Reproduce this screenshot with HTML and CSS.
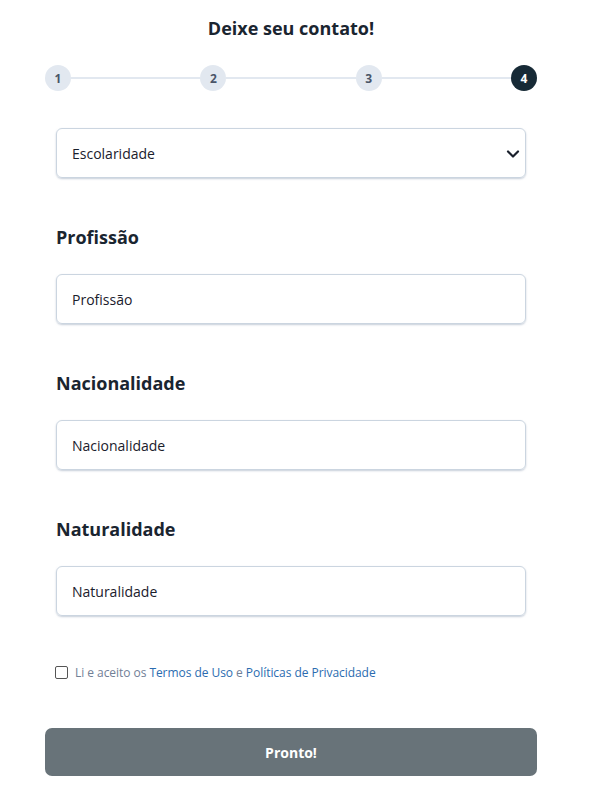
FILE: index.html
```html
<!DOCTYPE html>
<html lang="pt">
<head>
<meta charset="utf-8">
<link rel="stylesheet" href="styles.css">
</head>
<body>
<div class="page">
  <h1 class="title">Deixe seu contato!</h1>
  <div class="stepper">
    <span class="step">1</span>
    <span class="bar"></span>
    <span class="step">2</span>
    <span class="bar"></span>
    <span class="step">3</span>
    <span class="bar"></span>
    <span class="step active">4</span>
  </div>
  <div class="form">
    <div class="field select">
      <span>Escolaridade</span>
      <svg class="chev" width="14" height="10" viewBox="0 0 14 10"><path d="M2 2.5 L7 7.5 L12 2.5" fill="none" stroke="#1a202c" stroke-width="2.2" stroke-linecap="round" stroke-linejoin="round"/></svg>
    </div>
    <div class="group">
      <label class="label">Profissão</label>
      <div class="field">Profissão</div>
    </div>
    <div class="group">
      <label class="label">Nacionalidade</label>
      <div class="field">Nacionalidade</div>
    </div>
    <div class="group">
      <label class="label">Naturalidade</label>
      <div class="field">Naturalidade</div>
    </div>
    <div class="terms">
      <span class="box"></span>
      <span class="txt">Li e aceito os <a>Termos de Uso</a> e <a>Políticas de Privacidade</a></span>
    </div>
  </div>
  <button class="btn">Pronto!</button>
</div>
</body>
</html>
```

FILE: styles.css
```css
* { box-sizing: border-box; }
html, body { margin: 0; padding: 0; background: #fff; }
body { font-family: "Open Sans", "Noto Sans", sans-serif; color: #1a202c; }
.page { width: 492px; margin-left: 45px; padding-top: 16px; }
.title { margin: 0; font-size: 18px; font-weight: 700; line-height: 24px; text-align: center; color: #1a2530; }
.stepper { display: flex; align-items: center; margin-top: 25px; }
.step { width: 26px; height: 26px; border-radius: 50%; background: #e2e8f0; color: #4a5568; font-size: 12px; font-weight: 700; display: flex; align-items: center; justify-content: center; flex: none; }
.step.active { background: #172a36; color: #fff; }
.bar { flex: 1; height: 2px; background: #e2e8f0; }
.form { padding: 0 11px; margin-top: 37px; }
.field { height: 50px; border: 1px solid #cbd5e0; border-radius: 6px; box-shadow: 0 1px 2px rgba(160,174,192,0.6); padding: 0 15px; display: flex; align-items: center; font-size: 14px; color: #1a202c; }
.select { justify-content: space-between; padding-right: 5px; }
.chev { margin-top: 1px; }
.group { margin-top: 47px; }
.label { display: block; font-size: 18px; font-weight: 700; line-height: 24px; color: #1a2530; margin-bottom: 25px; }
.terms { display: flex; align-items: center; margin-top: 48px; margin-left: -1px; }
.box { width: 13px; height: 13px; border: 1px solid #555; border-radius: 2px; flex: none; }
.txt { margin-left: 7px; font-size: 12px; color: #718096; letter-spacing: -0.05px; }
.txt a { color: #2b6cb0; }
.btn { display: block; width: 492px; height: 48px; margin-top: 47px; border: none; border-radius: 7px; background: #687379; color: #fff; font-family: "Open Sans", sans-serif; font-size: 14px; font-weight: 700; }
```
